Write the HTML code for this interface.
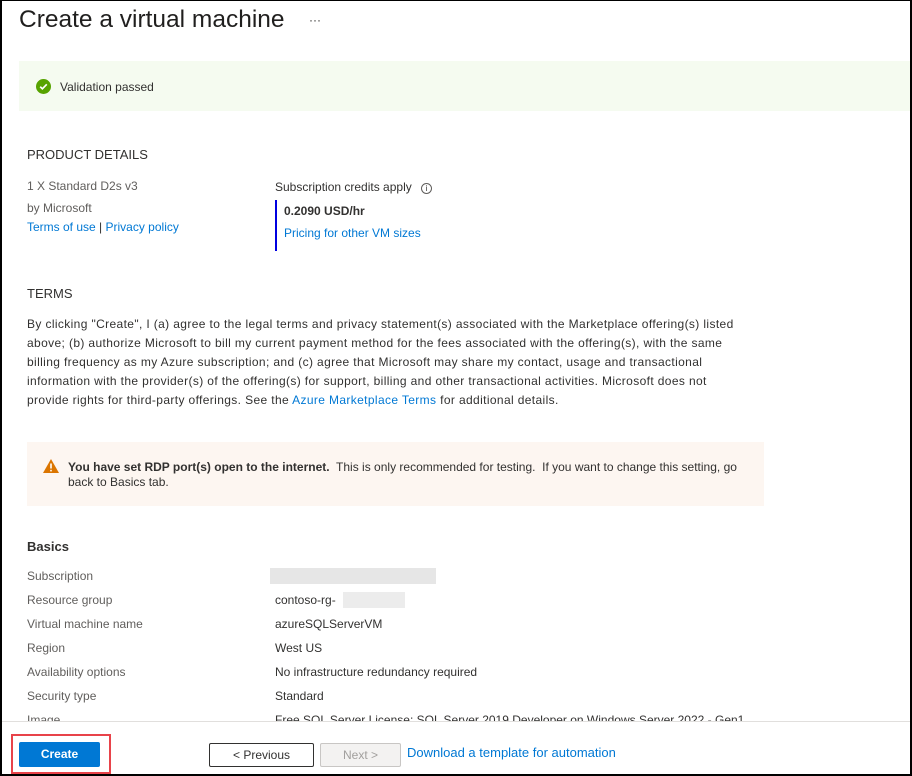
<!DOCTYPE html>
<html><head><style>
*{margin:0;padding:0;box-sizing:border-box}
body{width:912px;height:776px;overflow:hidden;background:#fff;font-family:"Liberation Sans",sans-serif;font-size:12px;color:#323130;position:relative}
.frame{position:absolute;left:0;top:0;width:912px;height:776px;border:2px solid #000;border-top:1px solid #000}
.a{position:absolute;white-space:nowrap}
.g{color:#605e5c}
.l{color:#0078d4}
</style></head><body>
<div class="a" style="left:19px;top:6px;font-size:24.5px;color:#201f1e">Create a virtual machine</div>
<div class="a" style="left:309px;top:13px;font-size:12px">···</div>
<div class="a" style="left:19px;top:61px;width:891px;height:50px;background:#f5fbf0"></div>
<svg class="a" style="left:36px;top:79px" width="15" height="15" viewBox="0 0 16 16"><circle cx="8" cy="8" r="8" fill="#57a300"/><path d="M4.5 8.2l2.3 2.3 4.7-4.8" stroke="#fff" stroke-width="1.8" fill="none"/></svg>
<div class="a" style="left:60px;top:80px">Validation passed</div>
<div class="a" style="left:27px;top:147px;font-size:13px">PRODUCT DETAILS</div>
<div class="a g" style="left:27px;top:179px">1 X Standard D2s v3</div>
<div class="a g" style="left:27px;top:201px">by Microsoft</div>
<div class="a" style="left:27px;top:220px"><span class="l">Terms of use</span> | <span class="l">Privacy policy</span></div>
<div class="a" style="left:275px;top:180px">Subscription credits apply <span style="display:inline-block;width:11px;height:11px;border:1px solid #605e5c;border-radius:50%;font-size:8px;text-align:center;line-height:9px;margin-left:6px">i</span></div>
<div class="a" style="left:275px;top:200px;width:2px;height:51px;background:#0000e0"></div>
<div class="a" style="left:284px;top:204px;font-weight:bold">0.2090 USD/hr</div>
<div class="a l" style="left:284px;top:226px">Pricing for other VM sizes</div>
<div class="a" style="left:27px;top:286px;font-size:13px">TERMS</div>
<div class="a" style="left:27px;top:315px;line-height:19px;letter-spacing:0.37px">By clicking "Create", I (a) agree to the legal terms and privacy statement(s) associated with the Marketplace offering(s) listed<br>above; (b) authorize Microsoft to bill my current payment method for the fees associated with the offering(s), with the same<br>billing frequency as my Azure subscription; and (c) agree that Microsoft may share my contact, usage and transactional<br>information with the provider(s) of the offering(s) for support, billing and other transactional activities. Microsoft does not<br>provide rights for third-party offerings. See the <span class="l">Azure Marketplace Terms</span> for additional details.</div>
<div class="a" style="left:27px;top:442px;width:737px;height:64px;background:#fdf6f1"></div>
<svg class="a" style="left:43px;top:459px" width="16" height="14" viewBox="0 0 16 14"><path d="M8 0L16 14H0z" fill="#db7500"/><rect x="7.2" y="4.5" width="1.6" height="5" fill="#fff"/><rect x="7.2" y="10.8" width="1.6" height="1.6" fill="#fff"/></svg>
<div class="a" style="left:68px;top:460px;line-height:15px;white-space:normal;width:690px"><b>You have set RDP port(s) open to the internet.</b>&nbsp; This is only recommended for testing.&nbsp; If you want to change this setting, go back to Basics tab.</div>
<div class="a" style="left:27px;top:539px;font-size:13px;font-weight:bold;color:#323130">Basics</div>
<div class="a g" style="left:27px;top:569px">Subscription</div>
<div class="a" style="left:270px;top:568px;width:166px;height:16px;background:#e6e6e6"></div>
<div class="a g" style="left:27px;top:593px">Resource group</div>
<div class="a" style="left:275px;top:593px">contoso-rg-</div>
<div class="a" style="left:343px;top:592px;width:62px;height:16px;background:#ececec"></div>
<div class="a g" style="left:27px;top:617px">Virtual machine name</div>
<div class="a" style="left:275px;top:617px">azureSQLServerVM</div>
<div class="a g" style="left:27px;top:641px">Region</div>
<div class="a" style="left:275px;top:641px">West US</div>
<div class="a g" style="left:27px;top:665px">Availability options</div>
<div class="a" style="left:275px;top:665px">No infrastructure redundancy required</div>
<div class="a g" style="left:27px;top:689px">Security type</div>
<div class="a" style="left:275px;top:689px">Standard</div>
<div class="a g" style="left:27px;top:713px">Image</div>
<div class="a" style="left:275px;top:713px">Free SQL Server License: SQL Server 2019 Developer on Windows Server 2022 - Gen1</div>
<div class="a" style="left:0;top:721px;width:912px;height:55px;background:#fff;border-top:1px solid #e1dfdd"></div>
<div class="a" style="left:11px;top:734px;width:100px;height:40px;border:2px solid #e8434a"></div>
<div class="a" style="left:19px;top:742px;width:81px;height:25px;background:#0078d4;border-radius:2px;color:#fff;font-weight:bold;text-align:center;line-height:25px">Create</div>
<div class="a" style="left:209px;top:743px;width:105px;height:24px;border:1px solid #323130;border-radius:2px;text-align:center;line-height:22px">&lt; Previous</div>
<div class="a" style="left:320px;top:743px;width:81px;height:24px;border:1px solid #c8c6c4;background:#f3f2f1;color:#a19f9d;border-radius:2px;text-align:center;line-height:22px">Next &gt;</div>
<div class="a l" style="left:407px;top:745px;font-size:13px">Download a template for automation</div>
<div class="frame"></div>
</body></html>
